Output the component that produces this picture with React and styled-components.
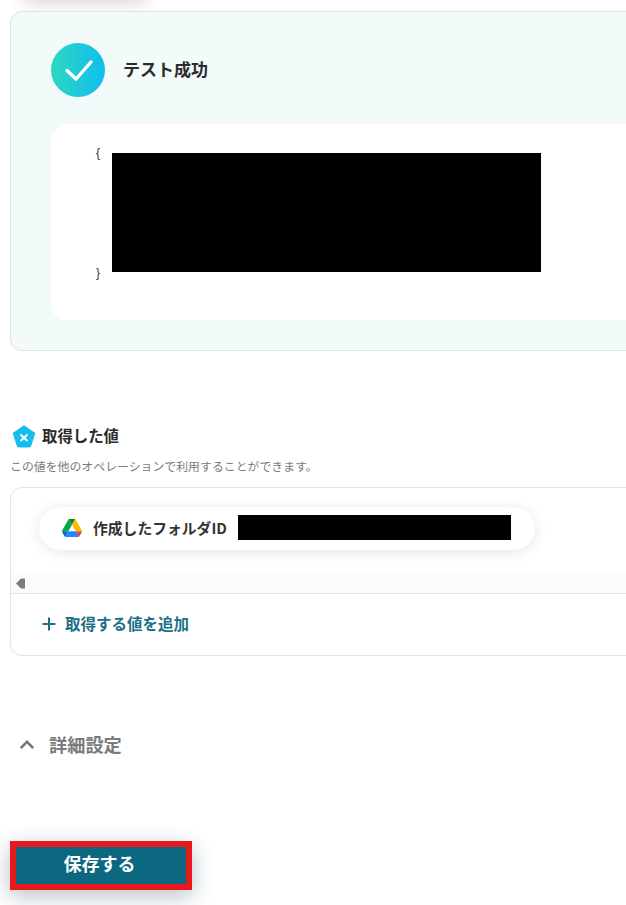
import React from 'react';
import styled, { createGlobalStyle } from 'styled-components';

const GlobalStyle = createGlobalStyle`
    html, body {
        margin: 0;
        padding: 0;
        background-color: #ffffff;
        overflow: hidden;
    }
    body {
        font-family: 'Noto Sans CJK JP', 'Noto Sans', sans-serif;
    }
`;

const Page = styled.div`
    width: 626px;
    height: 905px;
    overflow: hidden;
    padding-left: 10px;
    box-sizing: border-box;
`;

const HiddenButton = styled.div`
    width: 122px;
    height: 40px;
    margin: -42px 0 13px 14px;
    background-color: #ffffff;
    box-shadow: 0 4px 18px rgba(0, 0, 0, 18%);
`;

const ResultCard = styled.section`
    box-sizing: border-box;
    width: 700px;
    height: 340px;
    padding: 31px 40px;
    background-color: #f2fafa;
    border: 1px solid #e0e2e3;
    border-radius: 12px;
`;

const ResultHead = styled.div`
    display: flex;
    align-items: center;
    gap: 18px;
    height: 54px;
    margin-bottom: 27px;
`;

const ResultTitle = styled.h2`
    margin: 0 0 2px;
    font-size: 17px;
    line-height: 24px;
    font-weight: 700;
    color: #2b2b2b;
`;

const ResponseBox = styled.div`
    box-sizing: border-box;
    height: 196px;
    padding: 22px 0 0 45px;
    background-color: #ffffff;
    border-radius: 16px;
`;

const JsonRow = styled.div`
    display: flex;
`;

const BraceColumn = styled.div`
    display: flex;
    flex-direction: column;
    justify-content: space-between;
    width: 16px;
    height: 134px;
`;

const Brace = styled.span`
    font-family: 'Liberation Sans', sans-serif;
    font-size: 12px;
    line-height: 14px;
    color: #333333;
`;

const Redacted = styled.div`
    flex: none;
    background-color: #000000;
    width: ${(p) => p.$width};
    height: ${(p) => p.$height};
    margin-top: ${(p) => p.$top || '0'};
`;

const ValuesSection = styled.section`
    margin-top: 74px;
`;

const ValuesHead = styled.div`
    display: flex;
    align-items: center;
    gap: 6px;
    height: 22px;
    padding-left: 2px;
`;

const ValuesTitle = styled.h3`
    margin: 0 0 2px;
    font-size: 15.4px;
    line-height: 22px;
    font-weight: 700;
    color: #2b2b2b;
`;

const ValuesNote = styled.p`
    margin: 10px 0 12px;
    font-size: 11.9px;
    line-height: 18px;
    color: #7a7a7a;
`;

const ValuesCard = styled.div`
    box-sizing: border-box;
    width: 700px;
    height: 169px;
    border: 1px solid #e2e2e2;
    border-radius: 12px;
`;

const PillArea = styled.div`
    box-sizing: border-box;
    height: 86px;
    padding: 19px 0 0 28px;
`;

const ValuePill = styled.div`
    box-sizing: border-box;
    display: flex;
    align-items: center;
    width: 496px;
    height: 43px;
    padding: 0 0 2px 23px;
    background-color: #ffffff;
    border-radius: 22px;
    box-shadow: 0 2px 14px rgba(0, 0, 0, 10%);
`;

const PillLabel = styled.span`
    width: 134px;
    margin: 0 11px;
    font-size: 14.8px;
    line-height: 22px;
    font-weight: 700;
    color: #333333;
    white-space: nowrap;
`;

const ScrollTrack = styled.div`
    display: flex;
    align-items: center;
    height: 19px;
    padding-left: 5px;
    background-color: #fbfbfb;
    border-bottom: 1px solid #e2e2e2;
`;

const AddRow = styled.div`
    display: flex;
    align-items: center;
    gap: 9px;
    height: 60px;
    padding-left: 31px;
`;

const AddLabel = styled.span`
    margin-bottom: 2px;
    font-size: 15.5px;
    line-height: 22px;
    font-weight: 700;
    color: #1d6f86;
`;

const Details = styled.div`
    display: flex;
    align-items: center;
    gap: 15px;
    margin-top: 75px;
    padding-left: 10px;
    height: 26px;
`;

const DetailsLabel = styled.span`
    font-size: 18.2px;
    line-height: 26px;
    font-weight: 700;
    color: #7b7b7b;
`;

const SaveButton = styled.button`
    display: block;
    box-sizing: border-box;
    width: 182px;
    height: 49px;
    margin-top: 84px;
    padding: 0 3px 5px 0;
    background-color: #0b6880;
    border: 6px solid #e8191c;
    box-shadow: 0 6px 22px rgba(30, 60, 80, 32%);
    color: #ffffff;
    font-family: inherit;
    font-size: 18px;
    font-weight: 700;
    line-height: 24px;
`;

const CheckIcon = () => (
    <svg width="54" height="54" viewBox="0 0 54 54">
        <defs>
            <linearGradient id="check-bg" x1="0" y1="0" x2="1" y2="0">
                <stop offset="0" stopColor="#2dd7c0" />
                <stop offset="1" stopColor="#11bdee" />
            </linearGradient>
        </defs>
        <circle cx="27" cy="27" r="27" fill="url(#check-bg)" />
        <path d="M16 27.5 L25 36 L40 19" fill="none" stroke="#ffffff" strokeWidth="3.4" strokeLinecap="round" strokeLinejoin="round" />
    </svg>
);

const PentagonIcon = () => (
    <svg width="24" height="23" viewBox="0 0 24 23">
        <path d="M12 1 L22.5 8.3 L18.6 20.6 Q18.3 21.8 17 21.8 L7 21.8 Q5.7 21.8 5.4 20.6 L1.5 8.3 Z" fill="#15bdee" stroke="#15bdee" strokeWidth="1.5" strokeLinejoin="round" />
        <path d="M9 10 L15 15.5 M15 10 L9 15.5" stroke="#ffffff" strokeWidth="1.9" strokeLinecap="round" />
    </svg>
);

const DriveIcon = () => (
    <svg width="20" height="18" viewBox="0 0 87.3 78">
        <path d="m6.6 66.85 3.85 6.65c.8 1.4 1.95 2.5 3.3 3.3l13.75-23.8h-27.5c0 1.55.4 3.1 1.2 4.5z" fill="#0066da" />
        <path d="m43.65 25-13.75-23.8c-1.35.8-2.5 1.9-3.3 3.3l-25.4 44a9.06 9.06 0 0 0 -1.2 4.5h27.5z" fill="#00ac47" />
        <path d="m73.55 76.8c1.35-.8 2.5-1.9 3.3-3.3l1.6-2.75 7.65-13.25c.8-1.4 1.2-2.95 1.2-4.5h-27.5l5.85 11.5z" fill="#ea4335" />
        <path d="m43.65 25 13.75-23.8c-1.35-.8-2.9-1.2-4.5-1.2h-18.5c-1.6 0-3.15.45-4.5 1.2z" fill="#00832d" />
        <path d="m59.8 53h-32.3l-13.75 23.8c1.35.8 2.9 1.2 4.5 1.2h50.8c1.6 0 3.15-.45 4.5-1.2z" fill="#2684fc" />
        <path d="m73.4 26.5-12.7-22c-.8-1.4-1.95-2.5-3.3-3.3l-13.75 23.8 16.15 28h27.45c0-1.55-.4-3.1-1.2-4.5z" fill="#ffba00" />
    </svg>
);

const ScrollArrow = () => (
    <svg width="9" height="11" viewBox="0 0 9 11">
        <path d="M0 5.5 L5 0.5 H9 V10.5 H5 Z" fill="#7d7d7d" />
    </svg>
);

const PlusIcon = () => (
    <svg width="14" height="14" viewBox="0 0 14 14">
        <path d="M7 0.5 V13.5 M0.5 7 H13.5" stroke="#1d6f86" strokeWidth="2" />
    </svg>
);

const ChevronUp = () => (
    <svg width="14" height="9" viewBox="0 0 14 9">
        <path d="M0.8 8 L7 1.8 L13.2 8" fill="none" stroke="#777777" strokeWidth="2.6" />
    </svg>
);

function App() {
    return (
        <Page>
            <GlobalStyle />
            <HiddenButton />
            <ResultCard>
                <ResultHead>
                    <CheckIcon />
                    <ResultTitle>テスト成功</ResultTitle>
                </ResultHead>
                <ResponseBox>
                    <JsonRow>
                        <BraceColumn>
                            <Brace>{'{'}</Brace>
                            <Brace>{'}'}</Brace>
                        </BraceColumn>
                        <Redacted $width="429px" $height="119px" $top="7px" />
                    </JsonRow>
                </ResponseBox>
            </ResultCard>
            <ValuesSection>
                <ValuesHead>
                    <PentagonIcon />
                    <ValuesTitle>取得した値</ValuesTitle>
                </ValuesHead>
                <ValuesNote>この値を他のオペレーションで利用することができます。</ValuesNote>
                <ValuesCard>
                    <PillArea>
                        <ValuePill>
                            <DriveIcon />
                            <PillLabel>作成したフォルダID</PillLabel>
                            <Redacted $width="273px" $height="25px" />
                        </ValuePill>
                    </PillArea>
                    <ScrollTrack>
                        <ScrollArrow />
                    </ScrollTrack>
                    <AddRow>
                        <PlusIcon />
                        <AddLabel>取得する値を追加</AddLabel>
                    </AddRow>
                </ValuesCard>
            </ValuesSection>
            <Details>
                <ChevronUp />
                <DetailsLabel>詳細設定</DetailsLabel>
            </Details>
            <SaveButton>保存する</SaveButton>
        </Page>
    );
}

export default App;
